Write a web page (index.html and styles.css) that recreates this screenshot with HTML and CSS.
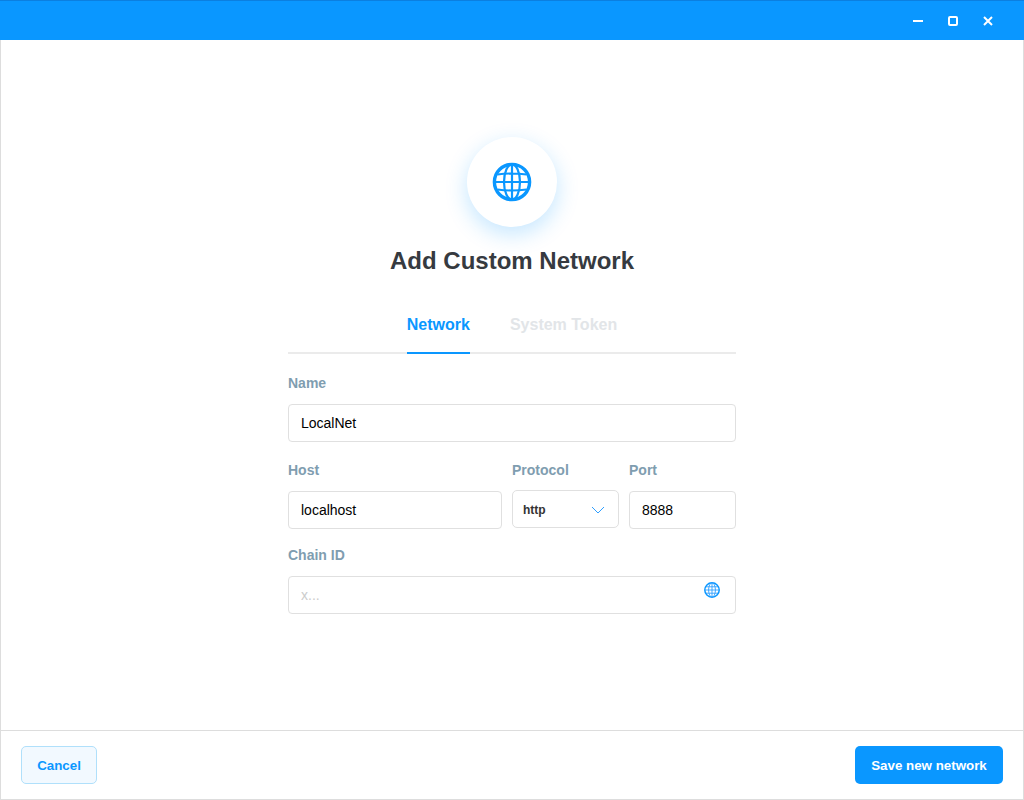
FILE: index.html
```html
<!DOCTYPE html>
<html lang="en">
<head>
<meta charset="utf-8">
<title>Add Custom Network</title>
<link rel="stylesheet" href="styles.css">
</head>
<body>
<div class="app">
  <header class="titlebar">
    <button class="win-btn" aria-label="Minimize"><svg width="12" height="12" viewBox="0 0 12 12"><path d="M1 6h10" stroke="#fff" stroke-width="2" fill="none"/></svg></button>
    <button class="win-btn" aria-label="Maximize"><svg width="12" height="12" viewBox="0 0 12 12"><rect x="2" y="2" width="8" height="8" rx="1" stroke="#fff" stroke-width="2" fill="none"/></svg></button>
    <button class="win-btn" aria-label="Close"><svg width="12" height="12" viewBox="0 0 12 12"><path d="M2 2l8 8M10 2l-8 8" stroke="#fff" stroke-width="2" fill="none"/></svg></button>
  </header>
  <main class="content">
    <div class="form">
      <div class="badge">
        <svg width="40" height="40" viewBox="0 0 40 40" fill="none" stroke="#0a97ff" stroke-width="2.2">
          <circle cx="20" cy="20" r="17.6" stroke-width="3.4"/>
          <ellipse cx="20" cy="20" rx="8" ry="17.6"/>
          <path d="M20 2.5v35M2.5 20h35M5.5 12.5q14.5 -2 29 0M5.5 27.5q14.5 2 29 0"/>
        </svg>
      </div>
      <h1 class="title">Add Custom Network</h1>
      <nav class="tabs">
        <span class="tab active">Network</span>
        <span class="tab">System Token</span>
      </nav>
      <div class="field name-field">
        <label class="label">Name</label>
        <input class="input" value="LocalNet">
      </div>
      <div class="row">
        <div class="field host"><label class="label">Host</label><input class="input" value="localhost"></div>
        <div class="field proto">
          <label class="label">Protocol</label>
          <div class="select"><span>http</span>
            <svg width="14" height="8" viewBox="0 0 14 8" fill="none" stroke="#2f9fff" stroke-width="1"><path d="M1 1l6 6 6-6"/></svg>
          </div>
        </div>
        <div class="field port"><label class="label">Port</label><input class="input" value="8888"></div>
      </div>
      <div class="field chain">
        <label class="label">Chain ID</label>
        <div class="input-wrap">
          <input class="input" placeholder="x...">
          <svg class="input-icon" width="16" height="16" viewBox="0 0 16 16" fill="none" stroke="#2f9fff" stroke-width="0.9">
            <circle cx="8" cy="8" r="7.2" stroke="#0a97ff" stroke-width="1.5"/>
            <ellipse cx="8" cy="8" rx="3.4" ry="7.2"/>
            <path d="M8 1v14M1 8h14M2 4.8h12M2 11.2h12"/>
          </svg>
        </div>
      </div>
    </div>
  </main>
  <footer class="footer">
    <button class="btn btn-ghost">Cancel</button>
    <button class="btn btn-primary">Save new network</button>
  </footer>
</div>
</body>
</html>
```
FILE: styles.css
```css
* { box-sizing: border-box; }
html, body { margin: 0; height: 100%; }
body { font-family: "Liberation Sans", Arial, sans-serif; background: #fff; }
.app { width: 1024px; height: 800px; display: flex; flex-direction: column; border: 1px solid #ddd; border-top: 0; }
.titlebar { height: 40px; margin: 0 -1px; flex: none; background: #0a97ff; border-top: 1px solid #0b7fe0; display: flex; justify-content: flex-end; align-items: center; gap: 15px; padding: 0 26px 0 0; }
.win-btn { width: 20px; height: 20px; padding: 0; border: 0; background: none; display: flex; align-items: center; justify-content: center; }
.content { flex: 1; display: flex; justify-content: center; padding-top: 97px; }
.form { width: 448px; display: flex; flex-direction: column; }
.badge { width: 90px; height: 90px; border-radius: 50%; align-self: center; background: #fff; display: flex; align-items: center; justify-content: center; box-shadow: 0 7px 22px rgba(10, 151, 255, 0.24); }
.title { margin: 19px 0 0; font-size: 24px; line-height: 30px; font-weight: 700; color: #363a40; text-align: center; font-family: "Liberation Sans", Arial, sans-serif; }
.tabs { margin-top: 26px; height: 52px; display: flex; justify-content: center; gap: 40px; border-bottom: 2px solid #ebebeb; }
.tab { font-size: 16px; font-weight: 700; line-height: 46px; height: 52px; color: #e2e5e8; }
.tab.active { color: #0a97ff; border-bottom: 2px solid #0a97ff; }
.field { display: flex; flex-direction: column; min-width: 0; }
.label { font-size: 14px; font-weight: 700; line-height: 16px; color: #7f9db0; }
.name-field { margin-top: 21px; }
.name-field .label, .row .label, .chain .label { margin-bottom: 13px; }
.row { margin-top: 20px; display: flex; gap: 10px; }
.host { width: 214px; flex: none; }
.proto { width: 107px; flex: none; }
.port { width: 107px; flex: none; }
.chain { margin-top: 18px; }
.input { width: 100%; height: 38px; border: 1px solid #e0e0e0; border-radius: 4px; padding: 0 12px; font: 14px "Liberation Sans", Arial, sans-serif; color: #000; background: #fff; outline: 0; }
.input::placeholder { color: #ccc; }
.select { height: 38px; margin-top: -1px; border: 1px solid #e0e0e0; border-radius: 5px; padding: 1px 13px 0 10px; display: flex; align-items: center; justify-content: space-between; font-size: 12px; font-weight: 700; color: #333; }
.input-wrap { position: relative; }
.input-icon { position: absolute; top: 6px; right: 16px; }
.footer { height: 69px; flex: none; border-top: 1px solid #ddd; display: flex; justify-content: space-between; align-items: center; padding: 0 20px; }
.btn { height: 38px; border-radius: 5px; font: 700 13.33px "Liberation Sans", Arial, sans-serif; padding: 0; }
.btn-ghost { width: 76px; background: #f2f9ff; border: 1px solid #b0e0fb; color: #0a97ff; }
.btn-primary { width: 148px; background: #0a97ff; border: 0; color: #fff; }
```
